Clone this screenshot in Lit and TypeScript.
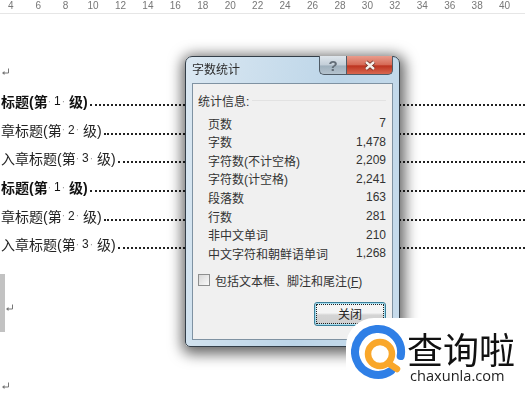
import { LitElement, html, css } from 'lit';
import { customElement } from 'lit/decorators.js';

const TICKS = [4, 6, 8, 10, 12, 14, 16, 18, 20, 22, 24, 26, 28, 30, 32, 34, 36, 38, 40];

const ROWS = [
  { text: '标题', level: 1 },
  { text: '章标题', level: 2 },
  { text: '入章标题', level: 3 },
  { text: '标题', level: 1 },
  { text: '章标题', level: 2 },
  { text: '入章标题', level: 3 },
];

const STATS = [
  ['页数', '7'],
  ['字数', '1,478'],
  ['字符数(不计空格)', '2,209'],
  ['字符数(计空格)', '2,241'],
  ['段落数', '163'],
  ['行数', '281'],
  ['非中文单词', '210'],
  ['中文字符和朝鲜语单词', '1,268'],
];

const returnMark = html`<svg class="mark" width="9" height="9" viewBox="0 0 9 9">
  <path d="M7.5 0.5V5H2" fill="none" stroke="#777" stroke-width="1" />
  <path d="M3.5 3L1 5l2.5 2z" fill="#777" />
</svg>`;

@customElement('app-root')
export class AppRoot extends LitElement {
  static styles = css`
    :host {
      display: block;
      width: 525px;
      height: 407px;
      position: relative;
      overflow: hidden;
      background: #fff;
      font-family: 'Liberation Sans', 'Noto Sans CJK SC', sans-serif;
      color: #222;
    }

    .page {
      filter: blur(0.4px);
    }

    /* Ruler */
    .ruler {
      display: flex;
      height: 13px;
      margin-left: -3px;
      border-bottom: 1px solid #e6e6e6;
      font-size: 10px;
      line-height: 12px;
      color: #777;
    }

    .tick {
      flex: 0 0 27.44px;
      text-align: center;
    }

    /* Document */
    .doc {
      padding: 44px 0 0 1px;
      display: flex;
      flex-direction: column;
    }

    .row {
      display: flex;
      align-items: center;
      height: 28.7px;
      font-size: 14px;
      white-space: nowrap;
    }

    .row.bold {
      font-weight: 700;
      color: #111;
    }

    .sp {
      color: #999;
      font-weight: 400;
      font-size: 10px;
      padding-right: 2px;
    }

    .sp.close {
      padding-right: 0;
    }

    .num {
      padding: 0 1px;
      font-weight: 400;
      font-size: 12px;
    }

    .leader {
      flex: 1;
      height: 0;
      margin: 8px 0 0 2px;
      border-bottom: 2px dotted #222;
    }

    .block {
      margin: 15px 0 0 -1px;
      height: 58px;
      display: flex;
      align-items: flex-end;
      padding-bottom: 19px;
      box-sizing: border-box;
    }

    .block-fill {
      width: 5px;
      height: 58px;
      margin-bottom: -19px;
      background: #c2c2c2;
    }

    .tail {
      margin-top: 50px;
      height: 10px;
      display: flex;
    }

    .mark {
      display: block;
    }

    /* Dialog */
    .dialog {
      position: absolute;
      left: 185px;
      top: 56px;
      width: 215px;
      height: 291px;
      box-sizing: border-box;
      padding: 0 6px 6px;
      display: flex;
      flex-direction: column;
      border: 1px solid #333e48;
      border-radius: 7px 7px 5px 5px;
      background: linear-gradient(100deg, #dbe8f2, #bcd5e8 60%, #c8dcec);
      box-shadow: 1px 3px 14px 4px rgba(0, 0, 0, 0.6);
      font-size: 12px;
    }

    .titlebar {
      flex: 0 0 26px;
      box-sizing: border-box;
      display: flex;
      align-items: center;
      position: relative;
      color: #2c2c2c;
      padding-bottom: 3px;
    }

    .caps {
      position: absolute;
      right: 0;
      top: -1px;
      display: flex;
      height: 19px;
    }

    .cap {
      display: flex;
      align-items: center;
      justify-content: center;
      box-sizing: border-box;
      border: 1px solid #4f5b66;
      border-top: none;
    }

    .cap.help {
      width: 27px;
      border-radius: 0 0 0 5px;
      border-right: none;
      background: linear-gradient(#dfe6ec, #c3ced8 50%, #9fb0bd 55%, #b5c3ce);
      color: #636d77;
      font-size: 15px;
      font-weight: 700;
    }

    .cap.close {
      width: 47px;
      border-radius: 0 0 5px 0;
      background: linear-gradient(#e99c8c, #d66a56 48%, #bd3420 55%, #d8674f);
    }

    .panel {
      flex: 1;
      display: flex;
      flex-direction: column;
      border: 1px solid #7f92a2;
      background: #f0f0f0;
      padding: 7px 6px 0 5px;
    }

    .legend {
      display: flex;
      align-items: center;
      gap: 3px;
      height: 18px;
      color: #333;
    }

    .legend::after {
      content: '';
      flex: 1;
      border-top: 1px solid #e2e2e2;
    }

    .stats {
      display: flex;
      flex-direction: column;
      padding: 5px 0 0 10px;
    }

    .stat {
      display: flex;
      justify-content: space-between;
      align-items: center;
      height: 18.55px;
      white-space: nowrap;
      color: #333;
    }

    .check-row {
      display: flex;
      align-items: center;
      gap: 5px;
      margin-top: 9px;
      height: 18px;
      color: #333;
      white-space: nowrap;
    }

    .box {
      width: 10px;
      height: 10px;
      border: 1px solid #8e8f8f;
      background: linear-gradient(135deg, #d8d8d8, #fafafa);
    }

    .actions {
      display: flex;
      justify-content: flex-end;
      margin-top: 13px;
    }

    .btn {
      width: 72px;
      height: 24px;
      box-sizing: border-box;
      display: flex;
      align-items: center;
      justify-content: center;
      padding: 0 0 2px;
      border: 1px solid #3c7f99;
      border-radius: 3px;
      outline: 1px dotted #222;
      outline-offset: -3px;
      background: linear-gradient(#f4f4f4 45%, #d4d4d4 55%, #cfcfcf);
      box-shadow: inset 0 0 0 1px #a6dff2;
      color: #222;
      font: inherit;
    }

    /* Watermark logo */
    .logo {
      position: absolute;
      left: 346px;
      top: 318px;
      right: 0;
      bottom: 0;
      display: flex;
      padding: 6px 0 0 5px;
      background: #fff;
      border-radius: 28px 0 0 0;
    }

    .logo svg {
      flex: none;
    }

    .brand {
      display: flex;
      flex-direction: column;
      align-items: flex-start;
      margin-top: 5px;
      color: #111;
    }

    .brand-cn {
      font-family: 'Noto Sans CJK SC', sans-serif;
      font-size: 36px;
      line-height: 38px;
      white-space: nowrap;
    }

    .brand-en {
      font-family: 'Open Sans', sans-serif;
      font-size: 14.6px;
      line-height: 17px;
      margin-left: 3px;
      color: #222;
    }
  `;

  private renderRow(row: { text: string; level: number }) {
    return html`<div class="row ${row.level === 1 ? 'bold' : ''}">
      <span>${row.text}(第</span><span class="sp">·</span><span class="num">${row.level}</span
      ><span class="sp close">·</span><span>&nbsp;级)</span>
      <span class="leader"></span>
    </div>`;
  }

  render() {
    return html`
      <div class="page">
        <div class="ruler">${TICKS.map((t) => html`<span class="tick">${t}</span>`)}</div>
        <div class="doc">
          <div class="row">${returnMark}</div>
          ${ROWS.map((r) => this.renderRow(r))}
          <div class="block"><div class="block-fill"></div>${returnMark}</div>
          <div class="tail">${returnMark}</div>
        </div>

        <div class="dialog">
          <div class="titlebar">
            字数统计
            <div class="caps">
              <div class="cap help">?</div>
              <div class="cap close">
                <svg width="14" height="11" viewBox="0 0 14 11">
                  <path d="M3 2l8 7M11 2l-8 7" stroke="#6a2a20" stroke-width="4" />
                  <path d="M3 2l8 7M11 2l-8 7" stroke="#f6efe9" stroke-width="2.4" />
                </svg>
              </div>
            </div>
          </div>
          <div class="panel">
            <div class="legend">统计信息:</div>
            <div class="stats">
              ${STATS.map(
                ([label, value]) =>
                  html`<div class="stat"><span>${label}</span><span>${value}</span></div>`
              )}
            </div>
            <div class="check-row">
              <span class="box"></span>
              <span>包括文本框、脚注和尾注(<u>F</u>)</span>
            </div>
            <div class="actions"><button class="btn">关闭</button></div>
          </div>
        </div>

        <div class="logo">
          <svg width="56" height="56" viewBox="0 0 56 56">
            <path
              d="M49.7 32A23 23 0 1 0 40.2 46.8"
              fill="none"
              stroke="#2f7fe6"
              stroke-width="8"
              stroke-linecap="round"
            />
            <circle cx="29" cy="30" r="12" fill="none" stroke="#f9a72b" stroke-width="6.5" />
            <path d="M37 39l9 6" stroke="#f9a72b" stroke-width="6.5" stroke-linecap="round" />
          </svg>
          <div class="brand">
            <span class="brand-cn">查询啦</span>
            <span class="brand-en">chaxunla.com</span>
          </div>
        </div>
      </div>
    `;
  }
}

declare global {
  interface HTMLElementTagNameMap {
    'app-root': AppRoot;
  }
}
